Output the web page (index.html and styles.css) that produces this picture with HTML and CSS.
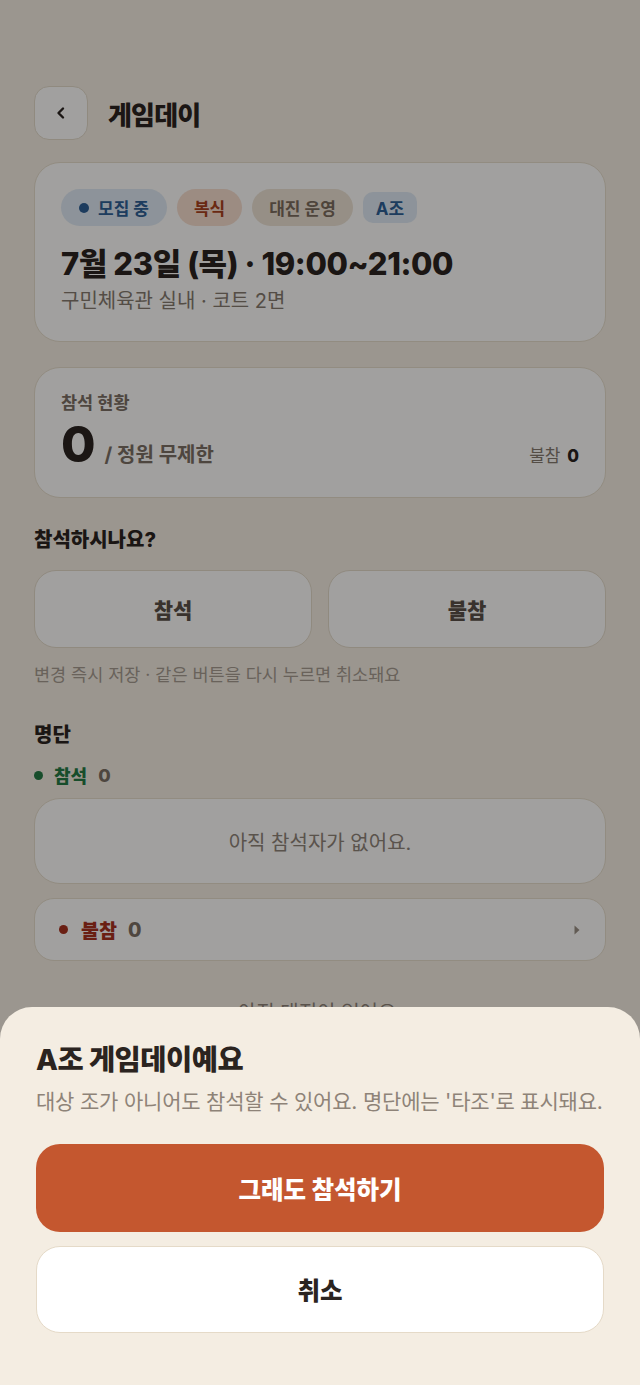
FILE: index.html
```html
<!doctype html>
<html lang="ko">
<head>
  <title>게임데이</title>
  <meta charset="utf-8">
  <link rel="stylesheet" href="styles.css">
</head>
<body>
  <div class="page">
    <div class="topbar">
      <button class="back-btn">
        <svg width="14" height="14" viewBox="0 0 14 14"><path d="M9 2.5 L4.5 7 L9 11.5" fill="none" stroke="#2b2420" stroke-width="2.4" stroke-linecap="round" stroke-linejoin="round"/></svg>
      </button>
      <h1>게임데이</h1>
    </div>

    <div class="card info-card">
      <div class="chips">
        <span class="chip chip-blue"><i class="dot"></i>모집 중</span>
        <span class="chip chip-red">복식</span>
        <span class="chip chip-sand">대진 운영</span>
        <span class="chip chip-group">A조</span>
      </div>
      <div class="when">7월 23일 (목) · 19:00~21:00</div>
      <div class="where">구민체육관 실내 · 코트 2면</div>
    </div>

    <div class="card count-card">
      <div class="label">참석 현황</div>
      <div class="count-row">
        <div class="count-main"><span class="big">0</span><span class="cap">/ 정원 무제한</span></div>
        <div class="absent">불참 <b>0</b></div>
      </div>
    </div>

    <h2 class="sec-title">참석하시나요?</h2>
    <div class="vote">
      <button class="vote-btn">참석</button>
      <button class="vote-btn">불참</button>
    </div>
    <p class="note">변경 즉시 저장 · 같은 버튼을 다시 누르면 취소돼요</p>

    <h2 class="sec-title roster-title">명단</h2>
    <div class="group-head"><i class="dot dot-green"></i><span class="g-name green">참석</span><span class="g-num">0</span></div>
    <div class="card empty-card">아직 참석자가 없어요.</div>
    <div class="card fold-row">
      <div class="group-head"><i class="dot dot-red"></i><span class="g-name red">불참</span><span class="g-num">0</span></div>
      <svg width="8" height="12" viewBox="0 0 8 12"><path d="M1.5 1.5 L6.5 6 L1.5 10.5 Z" fill="#9a8f84"/></svg>
    </div>
    <p class="bracket-empty">아직 대진이 없어요.</p>
  </div>

  <div class="dim"></div>

  <div class="sheet">
    <h3>A조 게임데이예요</h3>
    <p>대상 조가 아니어도 참석할 수 있어요. 명단에는 '타조'로 표시돼요.</p>
    <button class="btn-primary">그래도 참석하기</button>
    <button class="btn-cancel">취소</button>
  </div>
</body>
</html>
```

FILE: styles.css
```css
body{
  margin:0;
  background:#f4ede2;
  font-family:Inter,"Noto Sans CJK KR",sans-serif;
  color:#2b2420;
}
.page{
  width:640px;
  padding:86px 34px 120px;
  box-sizing:border-box;
}
button{
  font-family:inherit;
  cursor:pointer;
}
.topbar{
  display:flex;
  align-items:center;
  gap:20px;
}
.back-btn{
  width:54px;
  height:54px;
  border-radius:15px;
  border:1px solid #e3d9c9;
  background:#fdfcfa;
  display:flex;
  align-items:center;
  justify-content:center;
  padding:0;
}
.topbar h1{
  margin:0;
  font-size:26px;
  font-weight:800;
  letter-spacing:-0.8px;
}
.card{
  background:#fdfcfa;
  border:1px solid #e6dccb;
  border-radius:26px;
  box-sizing:border-box;
}
.info-card{
  margin-top:22px;
  padding:26px 26px 27px;
}
.chips{
  display:flex;
  align-items:center;
  gap:10px;
}
.chip{
  height:37px;
  padding:0 17px;
  border-radius:19px;
  display:flex;
  align-items:center;
  font-size:17px;
  font-weight:700;
}
.chip .dot{
  width:10px;
  height:10px;
  margin-right:9px;
}
.chip-blue{
  padding:0 18px;
  background:#dfe8f2;
  color:#2e5f95;
}
.chip-blue .dot{ background:#2e5f95; }
.chip-red{
  background:#f6dccd;
  color:#a8411d;
}
.chip-sand{
  background:#ece1d3;
  color:#7b6c5d;
}
.chip-group{
  height:31px;
  padding:0 13px;
  border-radius:10px;
  background:#dfe8f2;
  color:#2e5f95;
}
.when{
  margin-top:19px;
  font-size:31px;
  line-height:38px;
  font-weight:800;
  letter-spacing:-0.4px;
}
.where{
  margin-top:5px;
  font-size:20px;
  line-height:26px;
  color:#857a6f;
}
.count-card{
  margin-top:25px;
  padding:24px 26px 29px;
}
.label{
  font-size:17.5px;
  line-height:22px;
  font-weight:700;
  color:#7b6f64;
}
.count-row{
  display:flex;
  align-items:baseline;
  justify-content:space-between;
  margin-top:8px;
}
.count-main{
  display:flex;
  align-items:baseline;
}
.big{
  font-size:50px;
  line-height:44px;
  font-weight:800;
}
.cap{
  margin-left:9px;
  font-size:20px;
  font-weight:700;
  color:#7b6f64;
}
.absent{
  font-size:17px;
  color:#857a6f;
}
.absent b{
  color:#2b2420;
  font-weight:800;
  margin-left:2px;
}
.sec-title{
  margin:29px 0 0;
  font-size:20px;
  line-height:26px;
  font-weight:800;
}
.vote{
  display:grid;
  grid-template-columns:1fr 1fr;
  gap:16px;
  margin-top:17px;
}
.vote-btn{
  height:78px;
  border-radius:22px;
  border:1px solid #e3d9c9;
  background:#fdfcfa;
  font-size:21px;
  font-weight:800;
  color:#5a5047;
}
.note{
  margin:16px 0 0;
  font-size:17.5px;
  line-height:22px;
  color:#a59a8f;
}
.roster-title{
  margin-top:36px;
}
.group-head{
  display:flex;
  align-items:center;
  font-size:18px;
  font-weight:800;
}
.sec-title + .group-head{
  margin-top:14px;
}
.dot{
  display:inline-block;
  width:9px;
  height:9px;
  border-radius:50%;
}
.dot-green{ background:#257a45; }
.dot-red{ background:#a8321f; }
.g-name{ margin-left:11px; }
.green{ color:#257a45; }
.red{ color:#a8321f; }
.g-num{
  margin-left:11px;
  color:#7b6f64;
}
.fold-row .group-head{
  font-size:19.5px;
}
.fold-row .g-name{ margin-left:13px; }
.empty-card{
  margin-top:10px;
  height:86px;
  display:flex;
  align-items:center;
  justify-content:center;
  font-size:20px;
  color:#8e8378;
}
.fold-row{
  margin-top:14px;
  height:63px;
  display:flex;
  align-items:center;
  justify-content:space-between;
  padding:0 24px;
  border-radius:20px;
}
.bracket-empty{
  margin:36px 0 0;
  text-align:center;
  font-size:20px;
  color:#8e8378;
}
.dim{
  position:fixed;
  inset:0;
  background:rgba(0,0,0,0.365);
}
.sheet{
  position:fixed;
  left:0;
  right:0;
  bottom:0;
  height:378px;
  box-sizing:border-box;
  background:#f4ede2;
  border-radius:32px 32px 0 0;
  padding:36px 36px 0;
}
.sheet h3{
  margin:0;
  font-size:28.5px;
  line-height:34px;
  font-weight:800;
  letter-spacing:-0.5px;
}
.sheet p{
  margin:11px 0 0;
  font-size:21px;
  line-height:28px;
  color:#8e8378;
  letter-spacing:-0.2px;
}
.btn-primary,
.btn-cancel{
  display:block;
  width:100%;
  height:88px;
  border-radius:24px;
  font-size:24.5px;
  font-weight:800;
}
.btn-primary{
  margin-top:28px;
  border:none;
  background:#c4572f;
  color:#fff;
}
.btn-cancel{
  margin-top:14px;
  height:87px;
  background:#fff;
  border:1px solid #e5dac8;
  color:#2b2420;
}
```
